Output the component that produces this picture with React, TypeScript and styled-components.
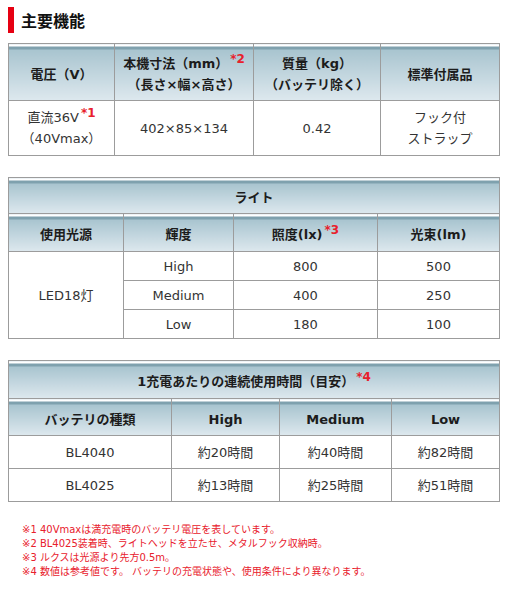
import styled, { createGlobalStyle } from 'styled-components'

const GlobalStyle = createGlobalStyle`
  body {
    margin: 0;
    background: #fff;
    font-family: "DejaVu Sans", Verdana, "Noto Sans CJK JP", sans-serif;
    color: #333;
  }
`

const Page = styled.div`
  width: 506px;
  padding: 7px 7px 0 8px;
  box-sizing: border-box;
`

const Heading = styled.h2`
  display: flex;
  align-items: center;
  gap: 7px;
  height: 26px;
  margin: 0 0 10px;
  font-family: "Noto Sans CJK JP", sans-serif;
  font-size: 16px;
  font-weight: bold;
  color: #111;

  &::before {
    content: '';
    display: block;
    width: 6px;
    height: 26px;
    background: #e60012;
  }
`

const Table = styled.table`
  width: 491px;
  table-layout: fixed;
  border-collapse: collapse;
  border: 1px solid #9c9c9c;
  margin-bottom: 21px;
  font-size: 13px;
`

const Th = styled.th<{ $h: number }>`
  box-sizing: border-box;
  height: ${p => p.$h}px;
  padding: 4px 2px 0;
  border: 1px solid #9c9c9c;
  background: linear-gradient(
    to bottom,
    #fff 0,
    #fff 2px,
    #7fa1ae 2px,
    #7fa1ae 5px,
    #a8c4cf 5px,
    #dde8ee 100%
  );
  font-weight: bold;
  color: #1c1c1c;
  line-height: 21px;
  text-align: center;
  vertical-align: middle;
`

const Td = styled.td<{ $h: number }>`
  box-sizing: border-box;
  height: ${p => p.$h}px;
  padding: 0 2px;
  border: 1px solid #9c9c9c;
  text-align: center;
  vertical-align: middle;
  line-height: 21px;
  color: #333;
`

const Mark = styled.sup`
  color: #e8202c;
  font-weight: bold;
  font-size: 12px;
  line-height: 0;
  margin-left: 2px;
  vertical-align: 5px;
`

const Notes = styled.ul`
  list-style: none;
  margin: 0;
  padding: 0 0 0 14px;
  font-size: 10px;
  line-height: 14px;
  color: #e8202c;
`

const lightRows = [
  ['High', '800', '500'],
  ['Medium', '400', '250'],
  ['Low', '180', '100'],
]

const batteryRows = [
  ['BL4040', '約20時間', '約40時間', '約82時間'],
  ['BL4025', '約13時間', '約25時間', '約51時間'],
]

const notes = [
  '※1 40Vmaxは満充電時のバッテリ電圧を表しています。',
  '※2 BL4025装着時、ライトヘッドを立たせ、メタルフック収納時。',
  '※3 ルクスは光源より先方0.5m。',
  '※4 数値は参考値です。 バッテリの充電状態や、使用条件により異なります。',
]

function App(): JSX.Element {
  return (
    <Page>
      <GlobalStyle />
      <Heading>主要機能</Heading>

      <Table>
        <colgroup>
          <col style={{ width: 106 }} />
          <col style={{ width: 139 }} />
          <col style={{ width: 127 }} />
          <col style={{ width: 119 }} />
        </colgroup>
        <thead>
          <tr>
            <Th $h={57}>電圧（V）</Th>
            <Th $h={57}>
              本機寸法（mm）<Mark>*2</Mark>
              <br />
              （長さ×幅×高さ）
            </Th>
            <Th $h={57}>
              質量（kg）
              <br />
              （バッテリ除く）
            </Th>
            <Th $h={57}>標準付属品</Th>
          </tr>
        </thead>
        <tbody>
          <tr>
            <Td $h={55}>
              直流36V<Mark>*1</Mark>
              <br />
              （40Vmax）
            </Td>
            <Td $h={55}>402×85×134</Td>
            <Td $h={55}>0.42</Td>
            <Td $h={55}>
              フック付
              <br />
              ストラップ
            </Td>
          </tr>
        </tbody>
      </Table>

      <Table>
        <colgroup>
          <col style={{ width: 115 }} />
          <col style={{ width: 110 }} />
          <col style={{ width: 144 }} />
          <col style={{ width: 122 }} />
        </colgroup>
        <thead>
          <tr>
            <Th $h={36} colSpan={4}>ライト</Th>
          </tr>
          <tr>
            <Th $h={38}>使用光源</Th>
            <Th $h={38}>輝度</Th>
            <Th $h={38}>
              照度(lx)<Mark>*3</Mark>
            </Th>
            <Th $h={38}>光束(lm)</Th>
          </tr>
        </thead>
        <tbody>
          {lightRows.map((row, i) => (
            <tr key={row[0]}>
              {i === 0 && (
                <Td $h={29} rowSpan={3}>
                  LED18灯
                </Td>
              )}
              {row.map(cell => (
                <Td $h={29} key={cell}>
                  {cell}
                </Td>
              ))}
            </tr>
          ))}
        </tbody>
      </Table>

      <Table>
        <colgroup>
          <col style={{ width: 163 }} />
          <col style={{ width: 108 }} />
          <col style={{ width: 112 }} />
          <col style={{ width: 108 }} />
        </colgroup>
        <thead>
          <tr>
            <Th $h={38} colSpan={4}>
              1充電あたりの連続使用時間（目安）<Mark>*4</Mark>
            </Th>
          </tr>
          <tr>
            <Th $h={37}>バッテリの種類</Th>
            <Th $h={37}>High</Th>
            <Th $h={37}>Medium</Th>
            <Th $h={37}>Low</Th>
          </tr>
        </thead>
        <tbody>
          {batteryRows.map(row => (
            <tr key={row[0]}>
              {row.map(cell => (
                <Td $h={33} key={cell}>
                  {cell}
                </Td>
              ))}
            </tr>
          ))}
        </tbody>
      </Table>

      <Notes>
        {notes.map(n => (
          <li key={n}>{n}</li>
        ))}
      </Notes>
    </Page>
  )
}

export default App
